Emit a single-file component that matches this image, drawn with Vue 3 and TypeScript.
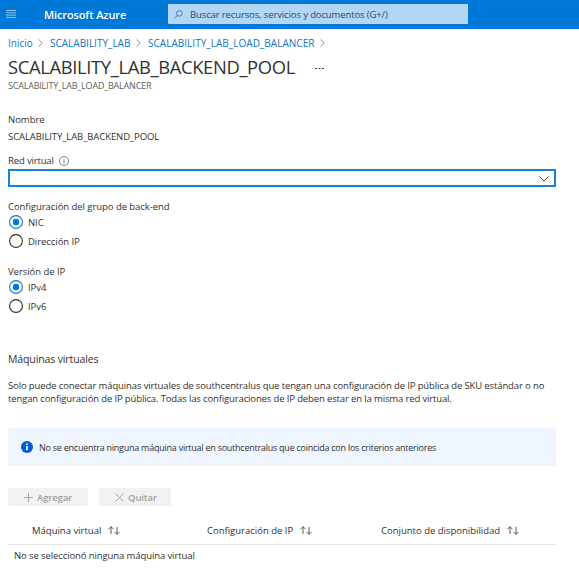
<script setup lang="ts">
import { ref } from 'vue'

interface RadioGroup {
  name: string
  label: string
  options: string[]
}

const groups: RadioGroup[] = [
  { name: 'pool', label: 'Configuración del grupo de back-end', options: ['NIC', 'Dirección IP'] },
  { name: 'version', label: 'Versión de IP', options: ['IPv4', 'IPv6'] },
]
const selected = ref<Record<string, string>>({ pool: 'NIC', version: 'IPv4' })
const columns: string[] = ['Máquina virtual', 'Configuración de IP', 'Conjunto de disponibilidad']
</script>

<template>
  <div class="page">
    <header class="topbar">
      <svg class="burger" viewBox="0 0 10 8"><path d="M0 .5h10M0 2.8h10M0 5.1h10M0 7.4h10" /></svg>
      <span class="brand">Microsoft Azure</span>
      <div class="search">
        <svg class="lens" viewBox="0 0 10 10"><circle cx="6" cy="3.8" r="3.1" /><path d="M3.8 6 .6 9.2" /></svg>
        <span class="hint">Buscar recursos, servicios y documentos (G+/)</span>
      </div>
    </header>

    <main class="content">
      <nav class="crumbs">
        <a class="c1">Inicio</a>
        <svg class="chev" viewBox="0 0 5 8"><path d="M.5.4 4.3 4 .5 7.6" /></svg>
        <a class="c2">SCALABILITY_LAB</a>
        <svg class="chev" viewBox="0 0 5 8"><path d="M.5.4 4.3 4 .5 7.6" /></svg>
        <a class="c3">SCALABILITY_LAB_LOAD_BALANCER</a>
        <svg class="chev" viewBox="0 0 5 8"><path d="M.5.4 4.3 4 .5 7.6" /></svg>
      </nav>

      <div class="titlerow">
        <h1>SCALABILITY_LAB_BACKEND_POOL</h1>
        <svg class="dots" viewBox="0 0 9 2"><path d="M0 .5h2M3.5 .5h2M7 .5h2" /></svg>
      </div>
      <div class="subtitle">SCALABILITY_LAB_LOAD_BALANCER</div>

      <div class="label name">Nombre</div>
      <div class="value">SCALABILITY_LAB_BACKEND_POOL</div>

      <div class="label net">
        <span>Red virtual</span>
        <svg class="info" viewBox="0 0 10 10"><circle cx="5" cy="5" r="4.5" /><path d="M5 4.2v3.3M5 2.4v1" /></svg>
      </div>
      <div class="select">
        <svg viewBox="0 0 10 6"><path d="M.4.5 5 5.1 9.6.5" /></svg>
      </div>

      <section v-for="g in groups" :key="g.name" class="group">
        <div class="label">{{ g.label }}</div>
        <div v-for="o in g.options" :key="o" class="option" @click="selected[g.name] = o">
          <svg class="radio" :class="{ on: selected[g.name] === o }" viewBox="0 0 14 14">
            <circle class="ring" cx="7" cy="7" r="6.4" />
            <circle v-if="selected[g.name] === o" class="dot" cx="7" cy="7" r="3.2" />
          </svg>
          <span>{{ o }}</span>
        </div>
      </section>

      <h2>Máquinas virtuales</h2>
      <p class="desc">
        <span class="l1">Solo puede conectar máquinas virtuales de southcentralus que tengan una configuración de IP pública de SKU estándar o no</span><br />
        <span class="l2">tengan configuración de IP pública. Todas las configuraciones de IP deben estar en la misma red virtual.</span>
      </p>

      <div class="notice">
        <svg viewBox="0 0 12 12"><circle cx="6" cy="6" r="6" fill="#015cda" /><path d="M6 5v4.2M6 2.5v1.6" stroke="#fff" stroke-width="1.7" /></svg>
        <span>No se encuentra ninguna máquina virtual en southcentralus que coincida con los criterios anteriores</span>
      </div>

      <div class="actions">
        <button class="add"><svg viewBox="0 0 10 10"><path d="M5 0v10M0 5h10" /></svg><span>Agregar</span></button>
        <button class="remove"><svg viewBox="0 0 10 10"><path d="m.5.5 9 9M9.5.5l-9 9" /></svg><span>Quitar</span></button>
      </div>

      <div class="thead">
        <div v-for="(c, i) in columns" :key="c" class="th" :class="'th' + i">
          <span>{{ c }}</span>
          <svg viewBox="0 0 12 9"><path d="M3 8V.8M.5 3.2 3 .7l2.5 2.5M9 .8v7.4M6.5 5.9 9 8.4l2.5-2.5" /></svg>
        </div>
      </div>
      <div class="empty">No se seleccionó ninguna máquina virtual</div>
    </main>
  </div>
</template>

<style>
body {
  background: #fff;
}
</style>

<style scoped>
.page {
  width: 579px;
  height: 569px;
  overflow: hidden;
  background: #fff;
  color: #323130;
  font-family: 'Open Sans', 'Noto Sans', sans-serif;
  font-size: 9.5px;
  line-height: 13px;
  white-space: nowrap;
}
svg {
  display: block;
  flex: none;
  fill: none;
  overflow: visible;
}
.topbar {
  height: 29px;
  box-sizing: border-box;
  background: #0078d7;
  display: flex;
  align-items: center;
  padding: 0 0 1px 6px;
}
.burger {
  width: 10px;
  height: 8px;
  stroke: #8dc3ee;
  stroke-width: 1;
}
.brand {
  width: 124px;
  margin-left: 28px;
  color: #fff;
  font-weight: 600;
  font-size: 11px;
  letter-spacing: -0.12px;
}
.search {
  width: 300px;
  height: 20px;
  box-sizing: border-box;
  padding-left: 6px;
  background: #b2d6f3;
  border-radius: 1px;
  display: flex;
  align-items: center;
  color: #1d4c78;
}
.lens {
  width: 9px;
  height: 9px;
  stroke: #28659b;
  stroke-width: 0.9;
}
.hint {
  margin-left: 7px;
  letter-spacing: -0.12px;
}
.content {
  padding: 0 23px 0 8px;
}
.crumbs {
  display: flex;
  align-items: center;
  height: 14px;
  padding-top: 7px;
  font-size: 10px;
  color: #0f73c9;
}
.crumbs a {
  display: block;
}
.c1 { width: 25px; }
.c2 { width: 81px; }
.c3 { width: 167px; letter-spacing: 0.03px; }
.chev {
  width: 5px;
  height: 8px;
  margin: 0 7px 0 5px;
  stroke: #8a8886;
  stroke-width: 0.9;
}
.titlerow {
  display: flex;
  align-items: center;
  height: 26px;
  margin-top: 4px;
}
h1 {
  margin: 0;
  width: 307px;
  font-size: 18.4px;
  font-weight: 400;
  line-height: 26px;
  letter-spacing: -0.36px;
}
.dots {
  width: 9px;
  height: 2px;
  margin-top: 4px;
  stroke: #444;
  stroke-width: 1;
}
.subtitle {
  margin-top: -1px;
  height: 13px;
  font-size: 9px;
  letter-spacing: -0.2px;
  color: #605e5c;
}
.name {
  margin-top: 21px;
}
.value {
  margin-top: 4px;
  letter-spacing: -0.08px;
}
.net {
  display: flex;
  align-items: center;
  margin-top: 11px;
}
.net span {
  width: 51px;
  letter-spacing: -0.15px;
}
.info {
  width: 10px;
  height: 10px;
  margin-top: 1px;
  stroke: #605e5c;
  stroke-width: 0.8;
}
.select {
  height: 18px;
  box-sizing: border-box;
  margin-top: 2px;
  border: 2px solid #1a83d8;
  display: flex;
  align-items: center;
  justify-content: flex-end;
  padding-right: 5px;
}
.select svg {
  width: 10px;
  height: 6px;
  margin-top: 1px;
  stroke: #323130;
  stroke-width: 1;
}
.group {
  height: 52px;
  margin-top: 13px;
}
.group span,
.group .label {
  letter-spacing: -0.05px;
}
.option {
  display: flex;
  align-items: center;
  height: 19px;
}
.radio {
  width: 14px;
  height: 14px;
  margin: 0 5px 1px 1px;
}
.ring {
  stroke: #323130;
  stroke-width: 1.1;
}
.on .ring {
  stroke: #0078d4;
}
.dot {
  fill: #0078d4;
}
h2 {
  margin: 35px 0 0;
  font-size: 10.5px;
  font-weight: 400;
  line-height: 15px;
  letter-spacing: -0.12px;
}
.desc {
  margin: 12px 0 0;
}
.l1 { letter-spacing: -0.126px; }
.l2 { letter-spacing: -0.135px; }
.notice {
  display: flex;
  align-items: center;
  height: 38px;
  box-sizing: border-box;
  margin-top: 23px;
  padding: 0 0 1px 13px;
  background: #f0f6ff;
}
.notice svg {
  width: 12px;
  height: 12px;
  margin-right: 6px;
}
.notice span {
  font-size: 9px;
  letter-spacing: -0.245px;
  padding-top: 1px;
}
.actions {
  display: flex;
  gap: 11px;
  margin-top: 22px;
}
button {
  display: flex;
  align-items: center;
  height: 18px;
  padding: 0 0 0 16px;
  border: 0;
  border-radius: 1px;
  background: #f3f2f1;
  color: #a19f9d;
  font: 600 9.5px/13px 'Open Sans', 'Noto Sans', sans-serif;
  letter-spacing: -0.1px;
}
button svg {
  width: 9px;
  height: 9px;
  margin-right: 4px;
  stroke: #a19f9d;
  stroke-width: 1;
}
.add { width: 80px; }
.remove { width: 72px; }
.thead {
  display: flex;
  height: 39px;
  box-sizing: border-box;
  border-bottom: 1px solid #e5e4e3;
  padding: 18px 0 0 24px;
}
.th {
  display: flex;
  align-items: center;
  height: 12px;
  font-weight: 500;
}
.th svg {
  width: 12px;
  height: 9px;
  margin-top: 1px;
  stroke: #484644;
  stroke-width: 0.9;
}
.th0 { width: 175px; }
.th0 span { width: 76px; }
.th1 { width: 174px; }
.th1 span { width: 93px; }
.th2 span { width: 126px; }
.empty {
  padding: 4px 0 0 6px;
  letter-spacing: -0.1px;
}
</style>
